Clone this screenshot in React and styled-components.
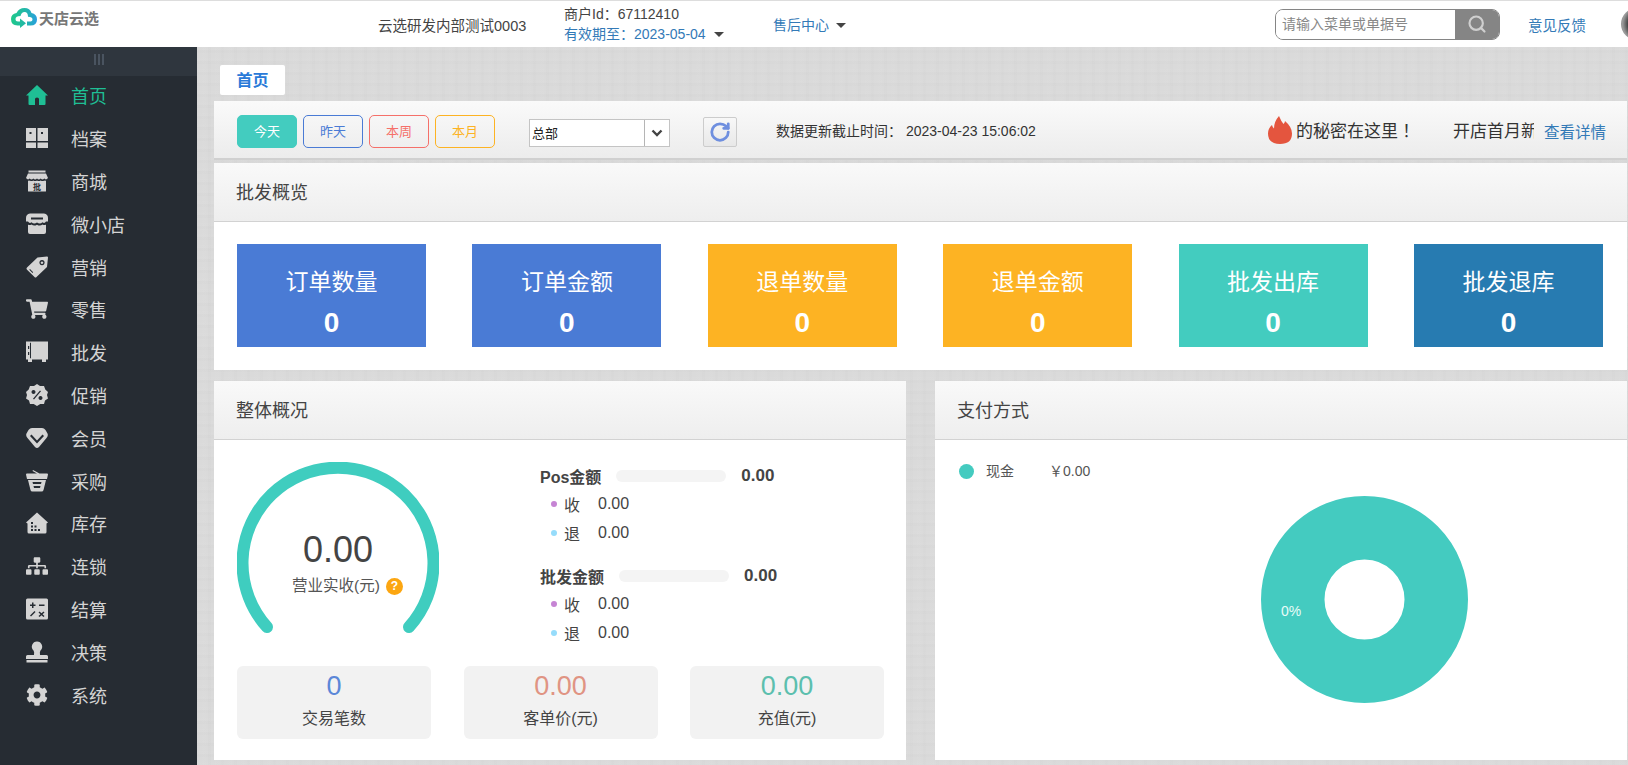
import React from 'react'
import styled, { createGlobalStyle } from 'styled-components'
import { FaCog, FaSitemap, FaShoppingCart } from 'react-icons/fa'
import { RotateCw, Search } from 'lucide-react'

const GlobalStyle = createGlobalStyle`
  html, body { margin: 0; padding: 0; height: 100%; overflow: hidden; }
  body { font-family: "Liberation Sans", "Noto Sans CJK SC", sans-serif; color: #333; }
  * { box-sizing: border-box; }
`

const Ico = ({ children }) => (
  <svg width="22" height="22" viewBox="0 0 22 22" fill="currentColor" fillRule="evenodd">{children}</svg>
)

const HomeIcon = () => <Ico><path d="M11 1 L22 11.5 H19.5 V20 Q19.5 21 18.5 21 H3.5 Q2.5 21 2.5 20 V11.5 H0 Z M9 15 V21 H13 V15 Q13 13.5 11 13.5 Q9 13.5 9 15 Z" /></Ico>
const FileIcon = () => <Ico><path d="M0 1 H10 V14 H0 Z M11.5 1 H22 V14 H11.5 Z M0 15.5 H10 V21 H0 Z M11.5 15.5 H22 V21 H11.5 Z M3.5 5 h2 v2 h-2 Z M15 5 h2 v2 h-2 Z" /></Ico>
const StoreIcon = () => (
  <Ico>
    <path d="M2.5 0.5 H19.5 V2.5 H2.5 Z M2 3.5 H20 L22 8 Q20 10.5 18.3 8.6 Q16.5 10.5 14.7 8.6 Q12.8 10.5 11 8.6 Q9.2 10.5 7.3 8.6 Q5.5 10.5 3.7 8.6 Q2 10.5 0 8 Z M2 10.5 Q3 11 3.8 10.6 Q5.5 11.6 7.3 10.6 Q9.2 11.6 11 10.6 Q12.8 11.6 14.7 10.6 Q16.5 11.6 18.3 10.6 Q19 11 20 10.5 V21 Q20 21.5 19.5 21.5 H2.5 Q2 21.5 2 21 Z" />
    <text x="11" y="19.5" fontSize="8" fontWeight="700" textAnchor="middle" fill="#262c33">批</text>
  </Ico>
)
const ShopIcon = () => <Ico><path d="M4 0.5 H18 Q22 1 22 5 V8.5 H20 Q18.5 11 16.5 9.2 Q14 11.5 11 9.5 Q8 11.5 5.5 9.2 Q3.5 11 2 8.5 H0 V5 Q0 1 4 0.5 Z M5 4.5 V6.5 H17 V4.5 Z M2 11.5 Q3.5 12.5 5.5 11.5 Q8 13.5 11 11.7 Q14 13.5 16.5 11.5 Q18.5 12.5 20 11.5 V19 Q20 21 18 21 H4 Q2 21 2 19 Z" /></Ico>
const TagIcon = () => <Ico><path d="M21 0.5 Q22 0.5 22 1.5 L21 11 L10.5 21 Q9.5 22 8.5 21 L0.8 13.5 Q0 12.5 1 11.5 L11.5 1.5 Z M16 4 A2.6 2.6 0 1 0 16.01 4 Z M16 5.4 A1.3 1.3 0 1 1 15.99 5.4 Z M4 13 L3.3 13.7 L6.5 17 L7.2 16.2 Z" /></Ico>
const BookIcon = () => <Ico><path d="M0 0.5 H22 V18.5 H20 V21 H16 V18.5 H6 V21 H2 V18.5 H0 Z M4 1.7 V17.3 H5 V1.7 Z M2 5 h1.2 v3 h-1.2 Z M2 11 h1.2 v3 h-1.2 Z" /></Ico>
const BadgeIcon = () => (
  <Ico>
    <path d="M11 0 L14 2 L18 2 L19.3 5.5 L22 8 L21 11 L22 14.5 L19 16.5 L18 20 L14.3 20 L11 22 L7.7 20 L4 20 L3 16.5 L0 14.5 L1 11 L0 8 L2.7 5.5 L4 2 L8 2 Z M14 6.5 L7 14.7 L8 15.5 L15 7.3 Z M7.5 6 A2 2 0 1 0 7.51 6 Z M14.5 12 A2 2 0 1 0 14.51 12 Z" />
  </Ico>
)
const GemIcon = () => <Ico><path d="M6 1 H16 Q18 1 19.5 3 L21.5 6.5 Q22.5 9 20.5 11 L13 20 Q11 22 9 20 L1.5 11 Q-0.5 9 0.5 6.5 L2.5 3 Q4 1 6 1 Z M4 9 L11 16.5 L18 9 L16.5 7.6 L11 13.5 L5.5 7.6 Z" /></Ico>
const BasketIcon = () => <Ico><path d="M7 0 L13.5 3.5 L21 3.5 Q22 3.5 22 4.5 L21 9 H1 L0 4.5 Q0 3.5 1 3.5 H11 L6.5 1 Z M2 10 H20 L17.5 20 Q17.2 21.5 15.5 21.5 H6.5 Q4.8 21.5 4.5 20 Z M6.5 12 L7 14 H15 L15.5 12 Z M7.5 16 L8 18 H14 L14.5 16 Z" /></Ico>
const DepotIcon = () => <Ico><path d="M11 0.5 L22 10.5 L20.5 11.5 V20 Q20.5 21.5 19 21.5 H3 Q1.5 21.5 1.5 20 V11.5 L0 10.5 Z M5 10 V12 H7 V10 Z M5 13.5 V15.5 H7 V13.5 Z M8.5 13.5 V15.5 H10.5 V13.5 Z M5 17 V19 H7 V17 Z M8.5 17 V19 H10.5 V17 Z M12 17 V19 H14 V17 Z" /></Ico>
const CalcIcon = () => <Ico><path d="M1.5 0.5 H20.5 Q22 0.5 22 2 V20 Q22 21.5 20.5 21.5 H1.5 Q0 21.5 0 20 V2 Q0 0.5 1.5 0.5 Z M6 4.5 V6.5 H4 V8 H6 V10 H7.5 V8 H9.5 V6.5 H7.5 V4.5 Z M13 6.5 V8 H18.5 V6.5 Z M8.5 13 L4 17.5 L5 18.5 L9.5 14 Z M13.5 13.5 L12.5 14.5 L14.5 16.2 L12.5 18 L13.5 19 L15.5 17.2 L17.5 19 L18.5 18 L16.5 16.2 L18.5 14.5 L17.5 13.5 L15.5 15.2 Z" /></Ico>
const StampIcon = () => <Ico><path d="M11 0.5 A5.2 5.2 0 0 1 14.5 9.5 Q13.5 10.5 14 14 H20.5 Q22 14 22 15.5 V18 H0 V15.5 Q0 14 1.5 14 H8 Q8.5 10.5 7.5 9.5 A5.2 5.2 0 0 1 11 0.5 Z M0.5 19 H21.5 V21.5 H0.5 Z" /></Ico>

const FlameIcon = () => (
  <svg width="24" height="28" viewBox="0 0 24 28">
    <path fill="#e4553e" d="M11 0 Q13 5 15.5 8 Q17 6.5 17 5 Q24 11 24 17.5 Q24 28 12 28 Q0 28 0 17.5 Q0 12.5 4 9 Q4.5 11.5 6 12.5 Q6 5.5 11 0 Z" />
  </svg>
)

const Logo = () => (
  <svg width="26" height="20" viewBox="0 0 26 20">
    <defs>
      <linearGradient id="cloud" x1="0" x2="1" y1="0" y2="0">
        <stop offset="0" stopColor="#1fc98a" />
        <stop offset="0.55" stopColor="#22b7a8" />
        <stop offset="1" stopColor="#2a9fe0" />
      </linearGradient>
    </defs>
    <path fill="url(#cloud)" d="M13.5 0 Q19 0 20.5 5 Q26 6 26 11.5 Q26 17.5 19.5 17.5 H16 V13.5 H19.5 Q21.5 13.5 21.5 11.5 Q21.5 9 17 8.8 Q17 4 13.5 4 Q10.5 4 9.5 8 Q4.5 8 4.5 11 Q4.5 13.5 7 13.5 H9 V10.5 L15 15.3 L9 20 V17.5 H6.5 Q0 17.5 0 11 Q0 6 5.5 5 Q8 0 13.5 0 Z" />
  </svg>
)

const menu = [
  ['首页', <HomeIcon />],
  ['档案', <FileIcon />],
  ['商城', <StoreIcon />],
  ['微小店', <ShopIcon />],
  ['营销', <TagIcon />],
  ['零售', <FaShoppingCart size={22} />],
  ['批发', <BookIcon />],
  ['促销', <BadgeIcon />],
  ['会员', <GemIcon />],
  ['采购', <BasketIcon />],
  ['库存', <DepotIcon />],
  ['连锁', <FaSitemap size={22} />],
  ['结算', <CalcIcon />],
  ['决策', <StampIcon />],
  ['系统', <FaCog size={22} />],
]

const cards = [
  ['订单数量', '#4a7bd5'],
  ['订单金额', '#4a7bd5'],
  ['退单数量', '#fdb323'],
  ['退单金额', '#fdb323'],
  ['批发出库', '#43ccbf'],
  ['批发退库', '#277bb1'],
]

const ranges = [
  ['今天', '#fff', '#43ccbf', '#43ccbf'],
  ['昨天', '#4a7bd5', '#4a7bd5', 'transparent'],
  ['本周', '#f5706a', '#f5706a', 'transparent'],
  ['本月', '#fdb323', '#fdb323', 'transparent'],
]

const stats = [
  ['0', '交易笔数', '#5b87d8'],
  ['0.00', '客单价(元)', '#e09483'],
  ['0.00', '充值(元)', '#5cbfae'],
]

function AmountGroup({ title }) {
  return (
    <Group>
      <GroupHead>
        <GroupTitle>{title}</GroupTitle>
        <Track />
        <GroupValue>0.00</GroupValue>
      </GroupHead>
      <SubRow><Dot $color="#c684d4" /><SubLabel>收</SubLabel>0.00</SubRow>
      <SubRow><Dot $color="#96dcfb" /><SubLabel>退</SubLabel>0.00</SubRow>
    </Group>
  )
}

function App() {
  return (
    <>
      <GlobalStyle />
      <Page>
        <Header>
          <Brand><Logo /><BrandName>天店云选</BrandName></Brand>
          <ShopName>云选研发内部测试0003</ShopName>
          <Merchant>
            <div>商户Id：67112410</div>
            <Expire>有效期至：2023-05-04<Caret $gap="8px" /></Expire>
          </Merchant>
          <Service>售后中心<Caret $gap="7px" /></Service>
          <SearchBox>
            <SearchInput placeholder="请输入菜单或单据号" />
            <SearchButton><Search size={20} strokeWidth={2.6} color="#cfcfcf" /></SearchButton>
          </SearchBox>
          <Feedback>意见反馈</Feedback>
          <Avatar />
        </Header>

        <Body>
          <Sidebar>
            <Handle><i /><i /><i /></Handle>
            {menu.map(([label, icon], i) => (
              <MenuItem key={label} $active={i === 0}>
                <MenuIcon>{icon}</MenuIcon>
                <span>{label}</span>
              </MenuItem>
            ))}
          </Sidebar>

          <Main>
            <Tab>首页</Tab>

            <Toolbar>
              <Ranges>
                {ranges.map(([t, c, b, bg]) => (
                  <RangeButton key={t} $color={c} $border={b} $bg={bg}>{t}</RangeButton>
                ))}
              </Ranges>
              <Select>
                <span>总部</span>
                <SelectArrow>
                  <svg width="12" height="8" viewBox="0 0 12 8"><path d="M1.5 1.5 L6 6 L10.5 1.5" fill="none" stroke="#444" strokeWidth="2.4" /></svg>
                </SelectArrow>
              </Select>
              <Refresh><RotateCw size={22} strokeWidth={3} color="#6f8fdf" /></Refresh>
              <UpdateTime>数据更新截止时间： 2023-04-23 15:06:02</UpdateTime>
              <Notice>
                <FlameIcon />
                <NoticeText>的秘密在这里！</NoticeText>
                <NoticeClip>开店首月新手</NoticeClip>
                <Detail>查看详情</Detail>
              </Notice>
            </Toolbar>

            <Panel>
              <PanelHead>批发概览</PanelHead>
              <Cards>
                {cards.map(([t, c]) => (
                  <Card key={t} $bg={c}>
                    <CardTitle>{t}</CardTitle>
                    <CardValue>0</CardValue>
                  </Card>
                ))}
              </Cards>
            </Panel>

            <Columns>
              <Panel>
                <PanelHead>整体概况</PanelHead>
                <Overall>
                  <OverallTop>
                    <Gauge>
                      <svg width="202" height="172" viewBox="0 0 202 172">
                        <path d="M30 165 A95.5 95.5 0 1 1 172 165" fill="none" stroke="#3fcdbf" strokeWidth="12" strokeLinecap="round" />
                      </svg>
                      <GaugeText>
                        <GaugeValue>0.00</GaugeValue>
                        <GaugeLabel>营业实收(元)<Help>?</Help></GaugeLabel>
                      </GaugeText>
                    </Gauge>
                    <Amounts>
                      <AmountGroup title="Pos金额" />
                      <AmountGroup title="批发金额" />
                    </Amounts>
                  </OverallTop>
                  <Stats>
                    {stats.map(([v, l, c]) => (
                      <Stat key={l}>
                        <StatValue $color={c}>{v}</StatValue>
                        <StatLabel>{l}</StatLabel>
                      </Stat>
                    ))}
                  </Stats>
                </Overall>
              </Panel>

              <Panel>
                <PanelHead>支付方式</PanelHead>
                <Payment>
                  <Legend>
                    <LegendDot />
                    <LegendName>现金</LegendName>
                    <LegendAmount>￥0.00</LegendAmount>
                  </Legend>
                  <Donut>
                    <svg width="207" height="207" viewBox="0 0 207 207">
                      <circle cx="103.5" cy="103.5" r="71.75" fill="none" stroke="#44cbc0" strokeWidth="63.5" />
                      <text x="30" y="120" fontSize="14" fill="#e8fbf8" textAnchor="middle">0%</text>
                    </svg>
                  </Donut>
                </Payment>
              </Panel>
            </Columns>
          </Main>
        </Body>
      </Page>
    </>
  )
}

const Page = styled.div`
  width: 1628px;
  height: 765px;
  display: flex;
  flex-direction: column;
  overflow: hidden;
`

const Header = styled.header`
  height: 47px;
  flex-shrink: 0;
  display: flex;
  align-items: center;
  background: #fff;
  border-top: 1px solid #ddd;
  font-size: 14px;
  overflow: hidden;
  > * { flex-shrink: 0; }
`

const Brand = styled.div`
  width: 378px;
  padding: 0 0 13px 11px;
  display: flex;
  align-items: center;
  gap: 2px;
`

const BrandName = styled.span`
  font-size: 15px;
  font-weight: 700;
  color: #777;
`

const ShopName = styled.div`
  width: 186px;
  font-size: 14.5px;
  color: #444;
`

const Merchant = styled.div`
  width: 209px;
  display: flex;
  flex-direction: column;
  gap: 5px;
  line-height: 15px;
  color: #444;
`

const Expire = styled.div`
  color: #337ab7;
`

const Caret = styled.i`
  display: inline-block;
  margin-left: ${p => p.$gap};
  vertical-align: 2px;
  border-top: 5px solid #444;
  border-left: 5px solid transparent;
  border-right: 5px solid transparent;
`

const Service = styled.div`
  width: 502px;
  color: #337ab7;
`

const SearchBox = styled.div`
  width: 225px;
  height: 31px;
  display: flex;
  border: 1px solid #858585;
  border-radius: 8px;
  overflow: hidden;
`

const SearchInput = styled.input`
  flex: 1;
  min-width: 0;
  border: 0;
  outline: 0;
  padding: 0 6px;
  font: inherit;
  &::placeholder { color: #888; }
`

const SearchButton = styled.div`
  width: 44px;
  display: flex;
  align-items: center;
  justify-content: center;
  background: #858585;
`

const Feedback = styled.div`
  margin-left: 28px;
  font-size: 14.5px;
  color: #337ab7;
`

const Avatar = styled.div`
  width: 32px;
  height: 32px;
  margin-left: 35px;
  border-radius: 50%;
  background: radial-gradient(circle at 60% 50%, #333 0 45%, #999 70%);
`

const Body = styled.div`
  flex: 1;
  min-height: 0;
  display: flex;
  background-color: #dadada;
  background-image:
    repeating-linear-gradient(90deg, rgba(0,0,0,.008) 0 3px, transparent 3px 7px, rgba(255,255,255,.015) 7px 11px, transparent 11px 13px),
    repeating-linear-gradient(0deg, rgba(255,255,255,.018) 0 3px, transparent 3px 8px, rgba(0,0,0,.008) 8px 11px);
`

const Sidebar = styled.aside`
  width: 197px;
  flex-shrink: 0;
  background: #262c33;
`

const Handle = styled.div`
  height: 29px;
  margin-bottom: -2px;
  padding-bottom: 5px;
  display: flex;
  align-items: center;
  justify-content: center;
  gap: 2px;
  background: #2f363e;
  i {
    width: 2px;
    height: 11px;
    background: #4a5460;
  }
`

const MenuItem = styled.div`
  height: 42.8px;
  padding-left: 26px;
  display: flex;
  align-items: center;
  gap: 23px;
  font-size: 18px;
  color: ${p => (p.$active ? '#1fbf95' : '#d4d4d4')};
`

const MenuIcon = styled.span`
  width: 22px;
  height: 22px;
  display: flex;
`

const Main = styled.main`
  flex: 1;
  min-width: 0;
  padding: 18px 1px 0 17px;
`

const Tab = styled.div`
  width: 65px;
  height: 30px;
  margin: 0 0 6px 6px;
  padding-bottom: 3px;
  display: flex;
  align-items: center;
  justify-content: center;
  background: #fff;
  border-radius: 2px;
  color: #2a7ad8;
  font-size: 16px;
  font-weight: 700;
`

const Toolbar = styled.div`
  height: 57px;
  margin-bottom: 5px;
  padding-left: 23px;
  display: flex;
  align-items: center;
  background: linear-gradient(#fafafa, #ececec);
  box-shadow: 0 2px 0 #d0d0d0;
`

const Ranges = styled.div`
  display: flex;
  gap: 6px;
  margin-top: 4px;
`

const RangeButton = styled.div`
  width: 60px;
  height: 33px;
  padding-bottom: 3px;
  display: flex;
  align-items: center;
  justify-content: center;
  border: 1px solid ${p => p.$border};
  border-radius: 5px;
  background: ${p => p.$bg};
  color: ${p => p.$color};
  font-size: 13px;
`

const Select = styled.div`
  width: 141px;
  height: 28px;
  margin: 6px 0 0 34px;
  padding-left: 2px;
  display: flex;
  align-items: center;
  justify-content: space-between;
  background: #fff;
  border: 1px solid #c4c4c4;
  font-size: 13px;
  color: #222;
`

const SelectArrow = styled.div`
  width: 25px;
  height: 100%;
  display: flex;
  align-items: center;
  justify-content: center;
  border-left: 1px solid #b5b5b5;
`

const Refresh = styled.div`
  width: 34px;
  height: 30px;
  margin: 4px 0 0 33px;
  display: flex;
  align-items: center;
  justify-content: center;
  border: 1px solid #ccc;
  border-radius: 2px;
  background: linear-gradient(#f8f8f8, #e8e8e8);
`

const UpdateTime = styled.div`
  margin-left: 39px;
  font-size: 14px;
  color: #333;
`

const Notice = styled.div`
  margin-left: auto;
  padding-right: 21px;
  display: flex;
  align-items: center;
`

const NoticeText = styled.span`
  margin-left: 4px;
  font-family: "Noto Sans CJK JP", sans-serif;
  font-size: 17px;
  line-height: 24px;
  color: #333;
`

const NoticeClip = styled.span`
  width: 81px;
  margin-left: 38px;
  overflow: hidden;
  white-space: nowrap;
  font-size: 17px;
  color: #333;
`

const Detail = styled.span`
  margin: 2px 0 0 10px;
  font-size: 15.5px;
  color: #337ab7;
`

const Panel = styled.section`
  background: #fff;
`

const PanelHead = styled.div`
  height: 59px;
  padding: 0 0 3px 22px;
  display: flex;
  align-items: center;
  background: linear-gradient(#f9f9f9, #eee);
  border-bottom: 1px solid #d2d2d2;
  font-size: 18px;
  color: #444;
`

const Cards = styled.div`
  height: 148px;
  padding: 22px 24px 0 23px;
  display: flex;
  justify-content: space-between;
  align-items: flex-start;
`

const Card = styled.div`
  width: 189px;
  height: 103px;
  display: flex;
  flex-direction: column;
  align-items: center;
  padding-top: 23px;
  background: ${p => p.$bg};
  color: #fff;
`

const CardTitle = styled.div`
  font-size: 23px;
  line-height: 30px;
`

const CardValue = styled.div`
  margin-top: 10px;
  font-size: 28px;
  line-height: 32px;
  font-weight: 700;
`

const Columns = styled.div`
  margin-top: 11px;
  display: grid;
  grid-template-columns: 1fr 1fr;
  gap: 29px;
`

const Overall = styled.div`
  height: 320px;
  padding: 22px 22px 0 23px;
`

const OverallTop = styled.div`
  display: flex;
  gap: 100px;
`

const Gauge = styled.div`
  position: relative;
  width: 202px;
  height: 172px;
`

const GaugeText = styled.div`
  position: absolute;
  left: 0;
  right: 0;
  top: 66px;
  display: flex;
  flex-direction: column;
  align-items: center;
`

const GaugeValue = styled.div`
  font-size: 36px;
  line-height: 44px;
  color: #444;
`

const GaugeLabel = styled.div`
  margin-top: 2px;
  display: flex;
  align-items: center;
  gap: 6px;
  padding-left: 19px;
  font-size: 15.5px;
  line-height: 24px;
  color: #555;
`

const Help = styled.span`
  width: 17px;
  height: 17px;
  display: flex;
  align-items: center;
  justify-content: center;
  border-radius: 50%;
  background: #fca611;
  color: #fff;
  font-size: 12px;
  font-weight: 700;
`

const Amounts = styled.div`
  display: flex;
  flex-direction: column;
  gap: 15px;
  height: 185px;
`

const Group = styled.div`
  font-size: 16px;
  color: #444;
`

const GroupHead = styled.div`
  height: 27px;
  margin-bottom: 1px;
  display: flex;
  align-items: center;
  gap: 15px;
`

const GroupTitle = styled.span`
  margin-left: 1px;
  font-weight: 700;
`

const GroupValue = styled.strong`
  font-size: 17px;
`

const Track = styled.i`
  width: 110px;
  height: 12px;
  border-radius: 6px;
  background: #f4f4f4;
`

const SubRow = styled.div`
  height: 28.5px;
  padding-left: 12px;
  display: flex;
  align-items: center;
`

const Dot = styled.i`
  width: 6px;
  height: 6px;
  margin-right: 7px;
  border-radius: 50%;
  background: ${p => p.$color};
`

const SubLabel = styled.span`
  width: 34px;
`

const Stats = styled.div`
  margin-top: 19px;
  display: grid;
  grid-template-columns: repeat(3, 194px);
  justify-content: space-between;
`

const Stat = styled.div`
  height: 73px;
  display: flex;
  flex-direction: column;
  align-items: center;
  padding-top: 6px;
  background: #f2f2f2;
  border-radius: 6px;
`

const StatValue = styled.div`
  font-size: 27px;
  line-height: 28px;
  color: ${p => p.$color};
`

const StatLabel = styled.div`
  margin-top: 7px;
  font-size: 16px;
  line-height: 24px;
  color: #444;
`

const Payment = styled.div`
  height: 320px;
  padding: 23px 0 0 24px;
`

const Legend = styled.div`
  height: 16px;
  display: flex;
  align-items: center;
  font-size: 14px;
  color: #555;
`

const LegendDot = styled.i`
  width: 15px;
  height: 15px;
  border-radius: 50%;
  background: #44cbc0;
`

const LegendName = styled.span`
  width: 63px;
  margin: -3px 0 0 12px;
`

const LegendAmount = styled.span`
  margin-top: -3px;
`

const Donut = styled.div`
  margin: 17px 0 0 302px;
  width: 207px;
  height: 207px;
`

export default App
